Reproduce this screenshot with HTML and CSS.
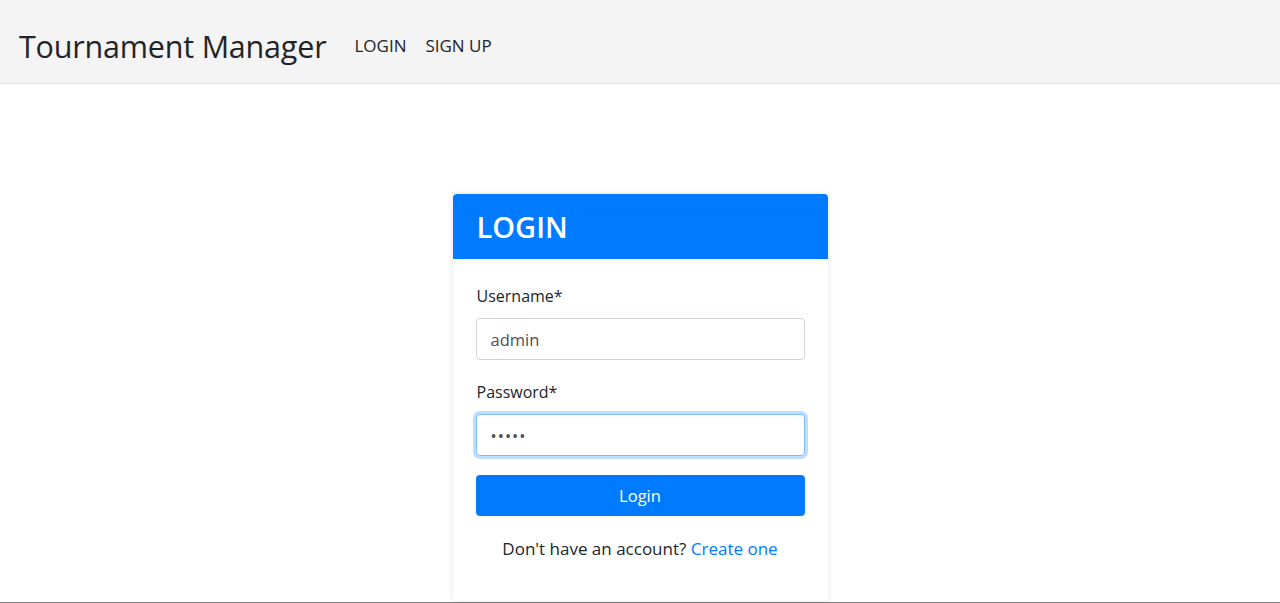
FILE: index.html
```html
<!DOCTYPE html>
<html>
  <head>
    <meta charset="UTF-8">
    <title>Tournament Manager</title>
    <link rel="stylesheet" href="styles.css">
  </head>
  <body>

    <nav class="navbar">
      <a class="brand" href="#">Tournament Manager</a>
      <a class="nav-link" href="#">LOGIN</a>
      <a class="nav-link" href="#">SIGN UP</a>
    </nav>

    <main class="main">
      <div class="card">
        <div class="card-header">LOGIN</div>
        <form class="card-body">
          <label class="label" for="username">Username*</label>
          <input class="input" id="username" type="text" value="admin">
          <label class="label" for="password">Password*</label>
          <input class="input input-focus" id="password" type="password" value="admin" autofocus>
          <button class="btn" type="button">Login</button>
          <p class="signup">Don't have an account? <a href="#">Create one</a></p>
        </form>
      </div>
    </main>

    <footer class="footer"></footer>

  </body>
</html>
```

FILE: styles.css
```css
*, html, body {
  margin: 0;
  padding: 0;
  box-sizing: border-box;
}

body {
  font-family: "Open Sans", "Noto Sans", sans-serif;
  color: #212529;
  background: #fff;
}

a { text-decoration: none }

.navbar {
  height: 84px;
  display: flex;
  align-items: center;
  padding: 8px 19px 0;
  background: #f4f4f4;
  border-bottom: 1px solid #e2e2e2;
}

.brand {
  font-size: 30.5px;
  font-weight: 500;
  color: #212529;
  margin-right: 28px;
  letter-spacing: -0.2px;
}

.nav-link {
  font-size: 17px;
  font-weight: 500;
  color: #212529;
  margin-right: 19px;
}

.main {
  display: flex;
  justify-content: center;
  padding-top: 110px;
  padding-bottom: 1px;
}

.card {
  width: 375px;
  border-radius: 4px;
  background: #fff;
  box-shadow: 0 0 6px rgba(0, 0, 0, .12);
  overflow: hidden;
}

.card-header {
  height: 65px;
  display: flex;
  align-items: center;
  padding: 0 24px;
  background: #007bff;
  color: #fff;
  font-size: 29px;
  font-weight: 600;
}

.card-body {
  display: flex;
  flex-direction: column;
  padding: 25px 23px 40px;
}

.label {
  font-size: 16px;
  line-height: 24px;
  margin-bottom: 10px;
  padding-left: 1px;
}

.input {
  height: 42px;
  padding: 0 14px;
  font-family: inherit;
  font-size: 16.5px;
  color: #495057;
  border: 1px solid #ced4da;
  border-radius: 4px;
  outline: none;
  margin-bottom: 20px;
}

.input-focus {
  border-color: #80bdff;
  box-shadow: 0 0 0 3px rgba(0, 123, 255, .25);
  margin-bottom: 19px;
  letter-spacing: 1px;
}

.btn {
  height: 41px;
  border: none;
  border-radius: 4px;
  background: #007bff;
  color: #fff;
  font-family: inherit;
  font-size: 16.5px;
}

.signup {
  text-align: center;
  font-size: 17px;
  line-height: 24px;
  margin-top: 21px;
}

.signup a { color: #007bff }

.footer {
  border-top: 1px solid #808080;
}
```
